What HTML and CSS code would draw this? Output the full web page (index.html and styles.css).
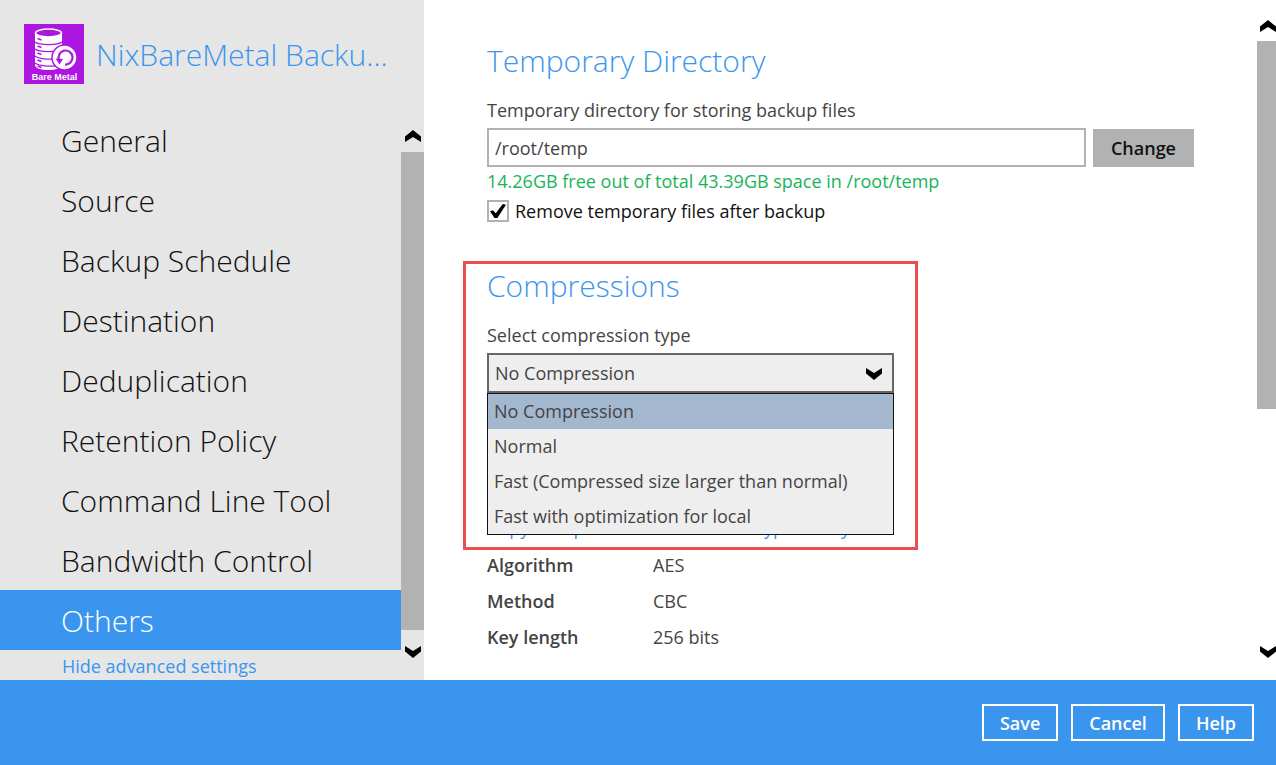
FILE: index.html
```
<!DOCTYPE html>
<html lang="en">
<head>
    <meta charset="UTF-8">
    <meta name="viewport" content="width=device-width, initial-scale=1.0">
    <title>NixBareMetal Backup Set</title>
    <link rel="stylesheet" href="styles.css">
</head>
<body>
    <div class="app">
        <div class="panels">
            <!-- Sidebar -->
            <aside class="sidebar">
                <div class="set-header">
                    <svg class="set-icon" viewBox="0 0 60 60" role="img" aria-label="Bare Metal">
                        <rect width="60" height="60" fill="#ad16e0"/>
                        <path d="M11 9v32c0 3 6 5 13.500 5s13.500-2 13.500-5V9z" fill="#fff"/>
                        <ellipse cx="24.500" cy="9" rx="13" ry="4" fill="#ad16e0" stroke="#fff" stroke-width="1.600"/>
                        <g fill="none" stroke="#ad16e0" stroke-width="1.300">
                            <path d="M11 18c4 3.500 23 3.500 27 0M11 25c4 3.500 23 3.500 27 0M11 32c4 3 14 3.500 18 3M11 39c4 3 15 3.500 21 3"/>
                            <path d="M13.500 14.500l4 1.500M13.500 22l4 1.500M13.500 29l4 1.500M13.500 36l4 1.500M13.500 42l4 1.500" stroke-width="1.500"/>
                        </g>
                        <circle cx="40.500" cy="33.500" r="12.500" fill="#fff" stroke="#ad16e0" stroke-width="1.500"/>
                        <path d="M35 36a7 7 0 1 1 6 4.500" fill="none" stroke="#ad16e0" stroke-width="2.200"/>
                        <path d="M31.500 34.500l7.500.5-3.500 5.500z" fill="#ad16e0"/>
                        <text class="set-icon-text" x="30.500" y="56" text-anchor="middle">Bare Metal</text>
                    </svg>
                    <h1 class="set-name">NixBareMetal Backu...</h1>
                </div>
                <div class="nav-area">
                    <nav class="nav">
                        <a class="nav-item" href="#">General</a>
                        <a class="nav-item" href="#">Source</a>
                        <a class="nav-item" href="#">Backup Schedule</a>
                        <a class="nav-item" href="#">Destination</a>
                        <a class="nav-item" href="#">Deduplication</a>
                        <a class="nav-item" href="#">Retention Policy</a>
                        <a class="nav-item" href="#">Command Line Tool</a>
                        <a class="nav-item" href="#">Bandwidth Control</a>
                        <a class="nav-item active" href="#">Others</a>
                        <a class="nav-toggle" href="#">Hide advanced settings</a>
                    </nav>
                    <div class="scrollbar nav-scrollbar">
                        <svg class="arrow" viewBox="0 0 16 12"><path d="M0 6.500L8 0l8 6.500V12L8 7 0 12z"/></svg>
                        <div class="thumb"></div>
                        <svg class="arrow" viewBox="0 0 16 12"><path d="M0 5.500L8 12l8-6.500V0L8 5 0 0z"/></svg>
                    </div>
                </div>
            </aside>

            <!-- Settings -->
            <main class="content">
                <section class="section">
                    <h2 class="title">Temporary Directory</h2>
                    <label class="label" for="temp-dir">Temporary directory for storing backup files</label>
                    <div class="dir-row">
                        <input class="text-box" id="temp-dir" type="text" value="/root/temp">
                        <button class="change" type="button">Change</button>
                    </div>
                    <p class="free-space">14.26GB free out of total 43.39GB space in /root/temp</p>
                    <label class="check"><input class="check-box" type="checkbox" checked>Remove temporary files after backup</label>
                </section>

                <section class="section compression">
                    <h2 class="title">Compressions</h2>
                    <label class="label" for="compression-type">Select compression type</label>
                    <div class="combo">
                        <select class="combo-box" id="compression-type">
                            <option>No Compression</option>
                            <option>Normal</option>
                            <option>Fast (Compressed size larger than normal)</option>
                            <option>Fast with optimization for local</option>
                        </select>
                        <svg class="arrow combo-arrow" viewBox="0 0 16 12"><path d="M0 5.500L8 12l8-6.500V0L8 5 0 0z"/></svg>
                        <ul class="combo-list">
                            <li class="combo-option selected">No Compression</li>
                            <li class="combo-option">Normal</li>
                            <li class="combo-option">Fast (Compressed size larger than normal)</li>
                            <li class="combo-option">Fast with optimization for local</li>
                        </ul>
                    </div>
                    <div class="callout"></div>
                </section>

                <section class="encryption">
                    <a class="copy-key" href="#">Copy to clipboard the whole encryption key</a>
                    <dl class="details">
                        <dt>Algorithm</dt>
                        <dd>AES</dd>
                        <dt>Method</dt>
                        <dd>CBC</dd>
                        <dt>Key length</dt>
                        <dd>256 bits</dd>
                    </dl>
                </section>
            </main>
            <div class="scrollbar content-scrollbar">
                <svg class="arrow" viewBox="0 0 16 12"><path d="M0 6.500L8 0l8 6.500V12L8 7 0 12z"/></svg>
                <div class="thumb"></div>
                <svg class="arrow" viewBox="0 0 16 12"><path d="M0 5.500L8 12l8-6.500V0L8 5 0 0z"/></svg>
            </div>
        </div>

        <footer class="actions">
            <button class="action" type="button">Save</button>
            <button class="action" type="button">Cancel</button>
            <button class="action" type="button">Help</button>
        </footer>
    </div>
</body>
</html>
```

FILE: styles.css
```
* {
    box-sizing: border-box;
}
body {
    margin: 0;
    font-family: "Open Sans", "Noto Sans", sans-serif;
    font-size: 18px;
    line-height: 24px;
    color: #444;
    background-color: #fff;
}
a {
    color: #3a95ee;
    text-decoration: none;
}
button, input, select {
    font: inherit;
    color: inherit;
    margin: 0;
}
.app {
    display: flex;
    flex-direction: column;
    height: 100vh;
}
.panels {
    display: flex;
    flex: 1;
    min-height: 0;
}

/* Sidebar */
.sidebar {
    display: flex;
    flex-direction: column;
    flex: 0 0 424px;
    min-width: 0;
    background-color: #e6e6e6;
}
.set-header {
    display: flex;
    align-items: center;
    gap: 12px;
    padding: 24px 24px 26px;
}
.set-icon {
    flex: none;
    width: 60px;
    height: 60px;
}
.set-icon-text {
    font-family: "Liberation Sans", Arial, sans-serif;
    font-size: 9px;
    font-weight: bold;
    fill: #fff;
}
.set-name {
    flex: 1;
    min-width: 0;
    margin: 0;
    padding-top: 2px;
    font-size: 30px;
    font-weight: 300;
    line-height: 40px;
    color: #3a95ee;
    white-space: nowrap;
}
.nav-area {
    display: flex;
    flex: 1;
    min-height: 0;
}
.nav {
    flex: 1;
    overflow: hidden;
}
.nav-item {
    display: block;
    padding: 2px 0 0 61px;
    font-size: 30px;
    font-weight: 300;
    line-height: 58px;
    color: #111;
}
.nav-item.active {
    color: #fff;
    background-color: #3a95ee;
}
.nav-toggle {
    display: block;
    padding: 4px 0 0 62px;
}

/* Scrollbars */
.scrollbar {
    display: flex;
    flex-direction: column;
    align-items: center;
}
.nav-scrollbar {
    width: 23px;
    padding: 20px 0 22px;
}
.content-scrollbar {
    align-items: flex-end;
    width: 19px;
    padding: 20px 0 22px;
}
.thumb {
    width: 100%;
    background-color: #b2b2b2;
}
.nav-scrollbar .thumb {
    flex: 1;
    margin: 10px 0 16px;
}
.content-scrollbar .thumb {
    height: 368px;
    margin: 9px 0 auto;
}
.arrow {
    flex: none;
    width: 16px;
    height: 12px;
}

/* Settings */
.content {
    flex: 1;
    min-width: 0;
    padding: 41px 63px 0;
    overflow: hidden;
}
.section {
    margin-bottom: 43px;
}
.title {
    margin: 0 0 17px;
    font-size: 30px;
    font-weight: 300;
    line-height: 40px;
    color: #3a95ee;
}
.label {
    display: block;
    margin-bottom: 6px;
}
.dir-row {
    display: flex;
    align-items: center;
    gap: 7px;
}
.text-box {
    flex: 1;
    min-width: 0;
    height: 39px;
    padding: 0 6px;
    border: 2px solid #b2b2b2;
    border-radius: 0;
}
.change {
    height: 38px;
    padding: 0 18px;
    border: 0;
    font-weight: 600;
    color: #111;
    background-color: #b2b2b2;
}
.free-space {
    margin: 2px 0 6px;
    color: #19b35a;
}
.check {
    display: flex;
    align-items: center;
    gap: 6px;
    color: #111;
}
.check-box {
    appearance: none;
    display: grid;
    place-items: center;
    width: 22px;
    height: 22px;
    border: 2px solid #b2b2b2;
    background-color: #fff;
}
.check-box:checked::before {
    content: "";
    width: 16px;
    height: 14px;
    background-color: #000;
    clip-path: polygon(0 52%, 18% 44%, 36% 66%, 80% 0, 100% 6%, 46% 100%, 28% 100%);
}
.compression {
    position: relative;
    width: 407px;
}
.combo {
    position: relative;
}
.combo-box {
    appearance: none;
    display: block;
    width: 100%;
    height: 40px;
    padding: 0 6px;
    border: 2px solid #666;
    border-radius: 0;
    background-color: #eee;
}
.combo-arrow {
    position: absolute;
    top: 15px;
    right: 12px;
    pointer-events: none;
}
.combo-list {
    position: absolute;
    top: 100%;
    left: 0;
    z-index: 1;
    width: 100%;
    margin: 0;
    padding: 0;
    border: 1px solid #111;
    background-color: #eee;
    list-style: none;
}
.combo-option {
    padding-left: 6px;
    line-height: 35px;
}
.combo-option.selected {
    background-color: #a3b8cf;
}
.callout {
    position: absolute;
    top: -5px;
    right: -24px;
    bottom: -157px;
    left: -24px;
    z-index: 2;
    border: 3px solid #e94f4f;
    pointer-events: none;
}
.encryption {
    padding-top: 80px;
}
.copy-key {
    display: block;
}
.details {
    display: grid;
    grid-template-columns: 166px 1fr;
    margin: 7px 0 0;
    line-height: 36px;
}
.details dt {
    font-weight: 600;
}
.details dd {
    margin: 0;
}

/* Bottom bar */
.actions {
    display: flex;
    justify-content: flex-end;
    gap: 13px;
    padding: 24px 22px;
    background-color: #3a95ee;
}
.action {
    height: 37px;
    padding: 0 16px;
    border: 2px solid #fff;
    font-weight: 600;
    line-height: 32px;
    color: #fff;
    background-color: transparent;
}
```
